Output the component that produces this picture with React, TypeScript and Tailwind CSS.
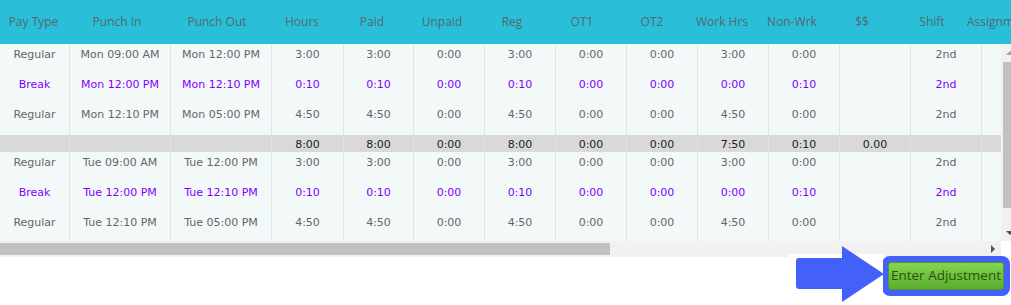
import React from 'react';

type Row = {
  kind: 'reg' | 'break';
  type: string;
  in: string;
  out: string;
  vals: string[];
  shift: string;
};

const HEAD = ['Pay Type', 'Punch In', 'Punch Out', 'Hours', 'Paid', 'Unpaid', 'Reg', 'OT1', 'OT2', 'Work Hrs', 'Non-Wrk', '$$', 'Shift', 'Assignment'];
const HEAD_W = ['w-[67px]', 'w-[100px]', 'w-[100px]', 'w-[70px]', 'w-[70px]', 'w-[70px]', 'w-[70px]', 'w-[70px]', 'w-[70px]', 'w-[70px]', 'w-[70px]', 'w-[70px]', 'w-[70px]', 'w-[80px]'];
const COL_W = ['w-[70px]', 'w-[101px]', 'w-[101px]', 'w-[72px]', 'w-[70px]', 'w-[71px]', 'w-[71px]', 'w-[71px]', 'w-[71px]', 'w-[71px]', 'w-[71px]', 'w-[71px]', 'w-[71px]', 'w-[71px]'];

const day = (d: string): Row[] => [
  { kind: 'reg', type: 'Regular', in: `${d} 09:00 AM`, out: `${d} 12:00 PM`, vals: ['3:00', '3:00', '0:00', '3:00', '0:00', '0:00', '3:00', '0:00', ''], shift: '2nd' },
  { kind: 'break', type: 'Break', in: `${d} 12:00 PM`, out: `${d} 12:10 PM`, vals: ['0:10', '0:10', '0:00', '0:10', '0:00', '0:00', '0:00', '0:10', ''], shift: '2nd' },
  { kind: 'reg', type: 'Regular', in: `${d} 12:10 PM`, out: `${d} 05:00 PM`, vals: ['4:50', '4:50', '0:00', '4:50', '0:00', '0:00', '4:50', '0:00', ''], shift: '2nd' },
];

const TOTAL = ['', '', '', '8:00', '8:00', '0:00', '8:00', '0:00', '0:00', '7:50', '0:10', '0.00', '', ''];

function DataRow({ row, h }: { row: Row; h: string }) {
  const cells = [row.type, row.in, row.out, ...row.vals, row.shift, ''];
  const color = row.kind === 'break' ? 'text-[#7f00ff]' : 'text-[#666]';
  return (
    <div className={`flex ${h} ${color}`}>
      {cells.map((c, i) => (
        <div key={i} className={`${COL_W[i]} shrink-0 border-r border-[#d8e7e7] pt-[2px] text-center leading-[18px] whitespace-nowrap`}>
          {c}
        </div>
      ))}
    </div>
  );
}

export default function App() {
  const mon = day('Mon');
  const tue = day('Tue');

  return (
    <div className="relative w-[1011px] h-[305px] overflow-hidden bg-white">
      {/* header */}
      <div className="flex h-[44px] bg-[#29bfd9] pb-[1px] items-center font-['Open_Sans',sans-serif] text-[12px] text-[#53696d] whitespace-nowrap">
        {HEAD.map((h, i) => (
          <div key={h} className={`${HEAD_W[i]} shrink-0 ${i === 13 ? 'text-left' : 'text-center'}`}>
            {h}
          </div>
        ))}
      </div>

      {/* body + vertical scrollbar */}
      <div className="flex h-[197px]">
        <div className="w-[1001px] shrink-0 overflow-hidden bg-[#f3f9f9] font-['DejaVu_Sans',Verdana,sans-serif] text-[11px]">
          <DataRow row={mon[0]} h="h-[30px]" />
          <DataRow row={mon[1]} h="h-[30px]" />
          <DataRow row={mon[2]} h="h-[31px]" />
          <div className="flex h-[17px] bg-[#d9d9d9] text-[#222]">
            {TOTAL.map((c, i) => (
              <div key={i} className={`${COL_W[i]} shrink-0 border-r border-[#e2e2e2] pt-[1px] text-center leading-[17px]`}>
                {c}
              </div>
            ))}
          </div>
          <DataRow row={tue[0]} h="h-[30px]" />
          <DataRow row={tue[1]} h="h-[30px]" />
          <DataRow row={tue[2]} h="h-[29px]" />
        </div>
        <div className="w-[17px] shrink-0 flex flex-col bg-[#f1f1f1]">
          <div className="h-[17px] flex items-center justify-center">
            <div className="w-0 h-0 border-l-[4px] border-r-[4px] border-b-[4px] border-l-transparent border-r-transparent border-b-[#a3a3a3]" />
          </div>
          <div className="mx-[2px] mt-[1px] h-[146px] bg-[#c1c1c1]" />
          <div className="flex-1 flex items-center justify-center">
            <div className="mt-[16px] w-0 h-0 border-l-[4px] border-r-[4px] border-t-[4px] border-l-transparent border-r-transparent border-t-[#505050]" />
          </div>
        </div>
      </div>

      {/* horizontal scrollbar */}
      <div className="flex w-[1001px] h-[16px] bg-[#f1f1f1]">
        <div className="w-[610px] h-[12px] my-[2px] bg-[#c1c1c1]" />
        <div className="flex-1" />
        <div className="w-[17px] flex items-center justify-center">
          <div className="w-0 h-0 border-t-[4px] border-b-[4px] border-l-[4px] border-t-transparent border-b-transparent border-l-[#505050]" />
        </div>
      </div>

      {/* footer */}
      <div className="flex justify-end pr-[1px]">
        <div className="-mt-[1px] w-[128px] h-[40px] rounded-[8px] bg-[#4361f9] p-[6px]">
          <button className="w-full h-full rounded-[3px] border border-[#4f9a2a] bg-gradient-to-b from-[#84d54e] to-[#5aae2e] font-['Open_Sans',sans-serif] text-[13.5px] text-[#2e4f13] leading-none whitespace-nowrap">
            Enter Adjustment
          </button>
        </div>
      </div>

      {/* annotation arrow */}
      <svg className="absolute left-[786px] top-[244px]" width="100" height="61" viewBox="0 0 100 61">
        <rect x="2" y="10" width="95" height="51" fill="#ffffff" />
        <path d="M13,14 H56 V2 L98,30 L56,58 V45 H13 Q10,45 10,42 V17 Q10,14 13,14 Z" fill="#4361f9" />
      </svg>
    </div>
  );
}
